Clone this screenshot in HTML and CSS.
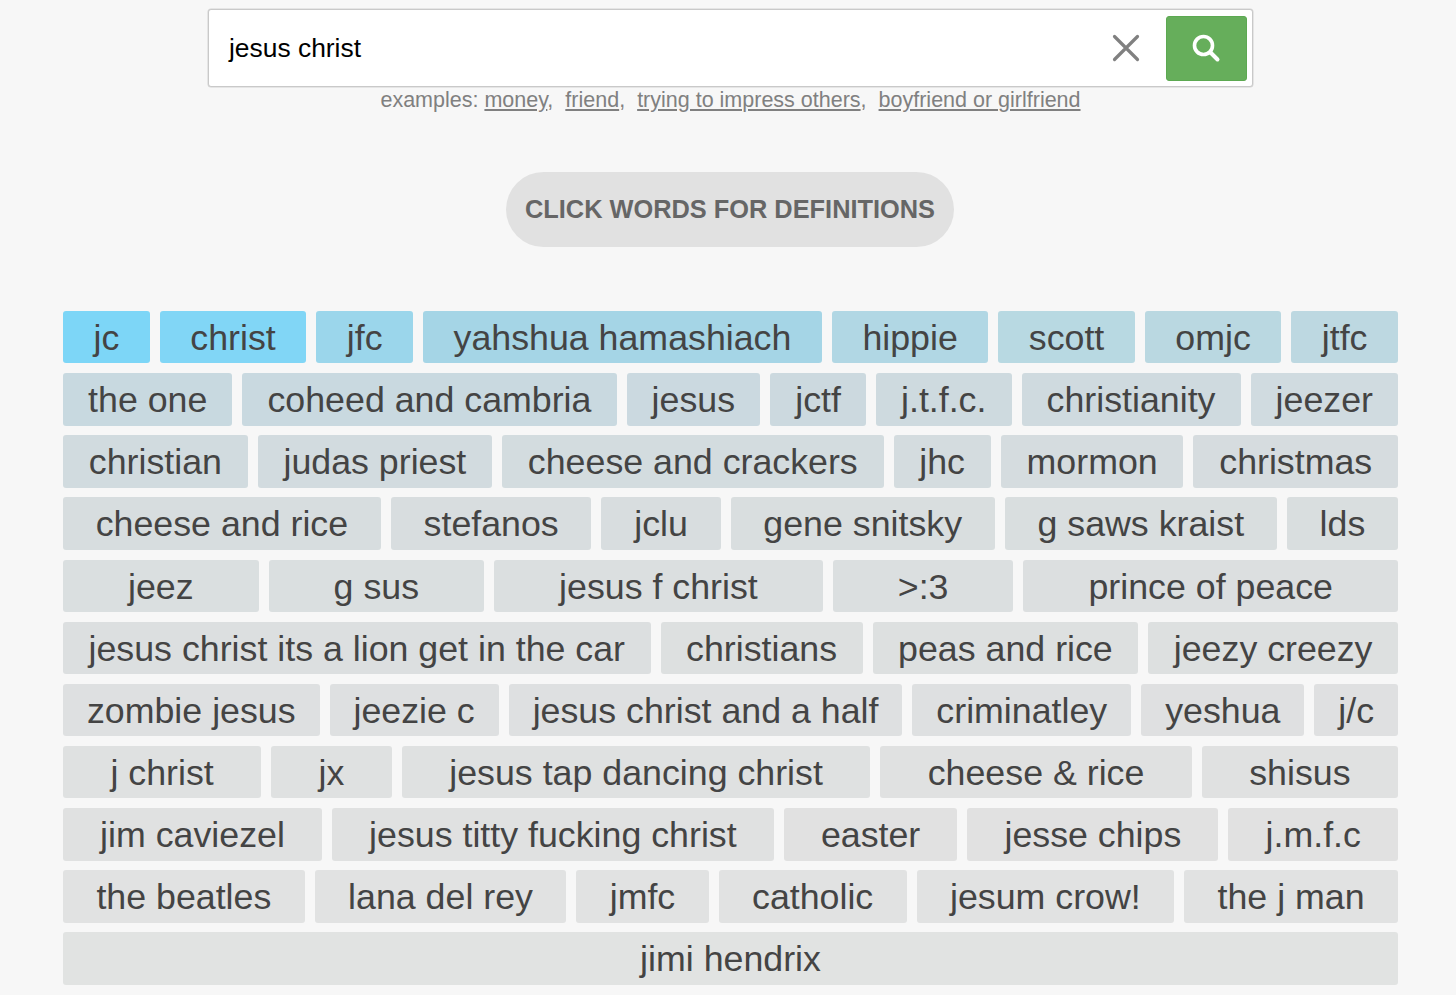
FILE: index.html
```html
<!DOCTYPE html>
<html lang="en">
<head>
<meta charset="utf-8">
<title>Search</title>
<link rel="stylesheet" href="styles.css">
</head>
<body>
<main class="page">
  <form class="search">
    <span class="search-text">jesus christ</span>
    <svg class="clear" viewBox="0 0 28 28" width="28" height="28" aria-hidden="true"><path d="M2.5 2.5 L25.5 25.5 M25.5 2.5 L2.5 25.5" fill="none" stroke="#808080" stroke-width="3.2" stroke-linecap="round"/></svg>
    <span class="go"><svg class="glass" viewBox="0 0 30 30" width="30" height="30" aria-hidden="true"><circle cx="12.5" cy="12.5" r="9" fill="none" stroke="#fff" stroke-width="3.6"/><path d="M19.5 19.5 L26.5 26.5" fill="none" stroke="#fff" stroke-width="4" stroke-linecap="round"/></svg></span>
  </form>
  <p class="examples">examples: <a href="#">money</a>,<span class="sep"></span><a href="#">friend</a>,<span class="sep"></span><a href="#">trying to impress others</a>,<span class="sep"></span><a href="#">boyfriend or girlfriend</a></p>
  <div class="hint-row"><div class="hint">CLICK WORDS FOR DEFINITIONS</div></div>
  <div class="tags">
    <div class="row">
      <a class="tag" style="background:#7dd6f7">jc</a>
      <a class="tag" style="background:#81d6f6">christ</a>
      <a class="tag" style="background:#9bd6eb">jfc</a>
      <a class="tag" style="background:#a5d5e6">yahshua hamashiach</a>
      <a class="tag" style="background:#b1d7e4">hippie</a>
      <a class="tag" style="background:#b8d9e2">scott</a>
      <a class="tag" style="background:#bad8e1">omjc</a>
      <a class="tag" style="background:#bdd8e1">jtfc</a>
    </div>
    <div class="row">
      <a class="tag" style="background:#c8d9e0">the one</a>
      <a class="tag" style="background:#c9d9e0">coheed and cambria</a>
      <a class="tag" style="background:#cbd9e0">jesus</a>
      <a class="tag" style="background:#ccd9df">jctf</a>
      <a class="tag" style="background:#cedadf">j.t.f.c.</a>
      <a class="tag" style="background:#cfdadf">christianity</a>
      <a class="tag" style="background:#d0dbe0">jeezer</a>
    </div>
    <div class="row">
      <a class="tag" style="background:#d1dbdf">christian</a>
      <a class="tag" style="background:#d2dbdf">judas priest</a>
      <a class="tag" style="background:#d3dcdf">cheese and crackers</a>
      <a class="tag" style="background:#d4dcdf">jhc</a>
      <a class="tag" style="background:#d5dcdf">mormon</a>
      <a class="tag" style="background:#d6dcdf">christmas</a>
    </div>
    <div class="row">
      <a class="tag" style="background:#d7dddf">cheese and rice</a>
      <a class="tag" style="background:#d8dddf">stefanos</a>
      <a class="tag" style="background:#d8dddf">jclu</a>
      <a class="tag" style="background:#d9dedf">gene snitsky</a>
      <a class="tag" style="background:#d9dedf">g saws kraist</a>
      <a class="tag" style="background:#d9dedf">lds</a>
    </div>
    <div class="row">
      <a class="tag" style="background:#dadfe0">jeez</a>
      <a class="tag" style="background:#dadfe0">g sus</a>
      <a class="tag" style="background:#dbdfe0">jesus f christ</a>
      <a class="tag" style="background:#dbdfe0">&gt;:3</a>
      <a class="tag" style="background:#dcdfe0">prince of peace</a>
    </div>
    <div class="row">
      <a class="tag" style="background:#dcdfe0">jesus christ its a lion get in the car</a>
      <a class="tag" style="background:#dde0e0">christians</a>
      <a class="tag" style="background:#dde0e0">peas and rice</a>
      <a class="tag" style="background:#dde0e0">jeezy creezy</a>
    </div>
    <div class="row">
      <a class="tag" style="background:#dee0e1">zombie jesus</a>
      <a class="tag" style="background:#dee0e1">jeezie c</a>
      <a class="tag" style="background:#dee0e1">jesus christ and a half</a>
      <a class="tag" style="background:#dee0e1">criminatley</a>
      <a class="tag" style="background:#dfe0e1">yeshua</a>
      <a class="tag" style="background:#dfe0e1">j/c</a>
    </div>
    <div class="row">
      <a class="tag" style="background:#dfe1e1">j christ</a>
      <a class="tag" style="background:#dfe1e1">jx</a>
      <a class="tag" style="background:#dfe1e1">jesus tap dancing christ</a>
      <a class="tag" style="background:#e0e1e1">cheese &amp; rice</a>
      <a class="tag" style="background:#e0e1e1">shisus</a>
    </div>
    <div class="row">
      <a class="tag" style="background:#e0e1e1">jim caviezel</a>
      <a class="tag" style="background:#e0e1e1">jesus titty fucking christ</a>
      <a class="tag" style="background:#e1e1e1">easter</a>
      <a class="tag" style="background:#e1e1e1">jesse chips</a>
      <a class="tag" style="background:#e1e1e1">j.m.f.c</a>
    </div>
    <div class="row">
      <a class="tag" style="background:#e1e2e2">the beatles</a>
      <a class="tag" style="background:#e1e2e2">lana del rey</a>
      <a class="tag" style="background:#e1e2e2">jmfc</a>
      <a class="tag" style="background:#e1e2e2">catholic</a>
      <a class="tag" style="background:#e1e2e2">jesum crow!</a>
      <a class="tag" style="background:#e1e2e2">the j man</a>
    </div>
    <div class="row">
      <a class="tag" style="background:#e1e3e2">jimi hendrix</a>
    </div>
  </div>
</main>
</body>
</html>
```
FILE: styles.css
```css
* { box-sizing: border-box; }
html, body { margin: 0; height: 995px; overflow: hidden; }
body { background: #f7f7f7; font-family: "Liberation Sans", Arial, sans-serif; }
.page { width: 1335px; margin-left: 63px; padding-top: 9px; }
.search {
  display: flex; align-items: center; height: 78px; margin: 0 145px 0 145px;
  padding: 1px 5px 0 20px; background: #fff; border: 1px solid #c9c9c9; border-radius: 3px;
  box-shadow: 0 0 0 .5px #d4d4d4;
}
.search-text { flex: 1; font-size: 26.4px; color: #000; margin-top: -1px; }
.clear { margin-right: 26px; margin-top: -1px; }
.go {
  display: flex; align-items: center; justify-content: center; width: 81px; height: 65px;
  background: #66ae5b; border: 1px solid #5ca951; border-radius: 3px;
}
.glass { margin: 0 2px 2px 0; }
.examples { margin: 0; height: 26px; line-height: 26px; text-align: center; font-size: 21.5px; color: #808080; }
.examples a { color: #808080; text-decoration: underline; }
.sep { display: inline-block; width: 12px; }
.hint-row { display: flex; justify-content: center; margin-top: 59px; padding-right: 1px; }
.hint {
  width: 448px; height: 75px; line-height: 74px; text-align: center; border-radius: 38px;
  background: #e1e1e1; color: #666; font-size: 25.36px; font-weight: 700;
}
.tags { display: flex; flex-direction: column; gap: 9.75px; margin-top: 64px; }
.row { display: flex; gap: 10px; }
.tag {
  flex: 1 1 auto; height: 52.4px; line-height: 55px; padding: 0 10px; text-align: center;
  font-size: 35.75px; color: #444; border-radius: 3px;
}
```
